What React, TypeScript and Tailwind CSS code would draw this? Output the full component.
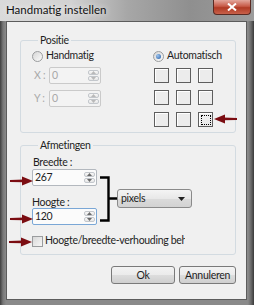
import React from "react";

function Spinner({ disabled }: { disabled?: boolean }) {
  const c = disabled ? "#b9b9b9" : "#6b6b6b";
  return (
    <div className="ml-auto mr-[1px] my-[1px] w-[11px] flex flex-col gap-[1px]">
      <div className="flex-1 rounded-[2px] border border-[#c3c7cc] bg-[linear-gradient(#f8f8f8,#e6e6e6)] flex items-center justify-center">
        <svg width="5" height="3" viewBox="0 0 5 3">
          <path d="M0 3 L2.5 0 L5 3 Z" fill={c} />
        </svg>
      </div>
      <div className="flex-1 rounded-[2px] border border-[#c3c7cc] bg-[linear-gradient(#f8f8f8,#e6e6e6)] flex items-center justify-center">
        <svg width="5" height="3" viewBox="0 0 5 3">
          <path d="M0 0 L2.5 3 L5 0 Z" fill={c} />
        </svg>
      </div>
    </div>
  );
}

function NumField({
  value,
  width,
  disabled,
  focused,
}: {
  value: string;
  width: string;
  disabled?: boolean;
  focused?: boolean;
}) {
  const border = disabled
    ? "border-[#cacaca] bg-[#f3f3f3] text-[#a8a8a8]"
    : focused
    ? "border-[#7aa7d6] bg-[#fbfbfb] text-[#1e1e1e]"
    : "border-[#b3b8be] bg-[#fbfbfb] text-[#1e1e1e]";
  return (
    <div className={`${width} h-[17px] rounded-[2px] border flex items-center ${border}`}>
      <span className="pl-[2px] leading-none text-[10.5px]">{value}</span>
      <Spinner disabled={disabled} />
    </div>
  );
}

function Radio({ checked, label }: { checked?: boolean; label: string }) {
  return (
    <div className="h-[14px] flex items-center gap-[3px]">
      <div className="w-[11px] h-[11px] rounded-full border border-[#9a9c9e] bg-[linear-gradient(135deg,#d6d6d6,#fbfbfb)] flex items-center justify-center">
        {checked && (
          <div className="w-[5px] h-[5px] rounded-full bg-[radial-gradient(circle_at_35%_35%,#9cc3ee,#245da6)]" />
        )}
      </div>
      <span>{label}</span>
    </div>
  );
}

function Arrow({ left, top, dir }: { left: string; top: string; dir: "l" | "r" }) {
  return (
    <svg
      className={`absolute ${left} ${top}`}
      width="24"
      height="10"
      viewBox="0 0 24 10"
    >
      <g transform={dir === "l" ? "translate(24 0) scale(-1 1)" : undefined}>
        <path d="M0 4 L14 3.6 L14 6.2 L0 6 Z" fill="#7b0d12" />
        <path d="M12 0.5 L23 5 L12 9.5 Z" fill="#7b0d12" />
      </g>
    </svg>
  );
}

export default function App() {
  const pos = [0, 1, 2, 3, 4, 5, 6, 7, 8];
  return (
    <div className="relative w-[254px] h-[305px] overflow-hidden bg-[linear-gradient(90deg,#3e3e3e,#777_3px,#8a8a8a_6px,#8a8a8a_248px,#6a6a6a_251px,#3a3a3a)] font-['Lato',sans-serif] text-[10.5px] tracking-[-0.3px] text-[#1e1e1e] flex flex-col">
      {/* titelbalk */}
      <div className="h-[21px] flex items-start bg-[linear-gradient(90deg,#dadada_0%,#d2d2d2_28%,#a7a7a7_50%,#8f8f8f_75%,#9c9c9c_100%)]">
        <span className="pl-[6px] pt-[3px] text-[11.5px] tracking-normal leading-[13px] text-[#111] [text-shadow:0_0_6px_#fff]">
          Handmatig instellen
        </span>
        <div className="ml-auto mr-[3px] w-[38px] h-[15px] rounded-b-[4px] border border-t-0 border-[#5a2a22] bg-[linear-gradient(#e3a79c,#c75a47_45%,#b03a24_55%,#c8614a)] flex items-center justify-center">
          <svg width="10" height="8" viewBox="0 0 10 8">
            <path d="M1 0.5 L9 7.5 M9 0.5 L1 7.5" stroke="#fff" strokeWidth="2" />
          </svg>
        </div>
      </div>

      {/* venster inhoud */}
      <div className="flex-1 ml-[6px] mr-[7px] mb-[5px] bg-[#f0f0f0] border border-[#5c5c5c] flex flex-col pl-[13px]">
        <fieldset className="mt-[11px] w-[216px] rounded-[3px] border border-[#d3dbe1] pl-[11px] pt-[2px] pb-[5px]">
          <legend className="ml-[6px] px-[2px] leading-[14px]">Positie</legend>
          <div className="flex">
            <div className="w-[121px] flex flex-col">
              <Radio label="Handmatig" />
              <div className="mt-[4px] flex items-center">
                <span className="w-[17px] pl-[2px] text-[#a9a9a9]">X :</span>
                <NumField value="0" width="w-[52px]" disabled />
              </div>
              <div className="mt-[6px] flex items-center">
                <span className="w-[17px] pl-[2px] text-[#a9a9a9]">Y :</span>
                <NumField value="0" width="w-[52px]" disabled />
              </div>
            </div>
            <div className="flex flex-col">
              <Radio checked label="Automatisch" />
              <div className="mt-[5px] ml-[1px] grid grid-cols-[15px_15px_15px] gap-[7px]">
                {pos.map((i) => (
                  <div
                    key={i}
                    className="w-[15px] h-[15px] border border-[#5e5e5e] bg-[#ececec] shadow-[inset_1px_1px_0_#fff] flex items-center justify-center"
                  >
                    {i === 8 && <div className="w-[10px] h-[10px] border border-dotted border-black" />}
                  </div>
                ))}
              </div>
            </div>
          </div>
        </fieldset>

        <fieldset className="mt-[5px] w-[216px] rounded-[3px] border border-[#d3dbe1] pl-[11px] pt-[4px] pb-[7px]">
          <legend className="ml-[6px] px-[2px] leading-[14px]">Afmetingen</legend>
          <div className="flex items-start">
            <div className="w-[65px] flex flex-col">
              <span className="pl-[1px] h-[12px] leading-[12px]">Breedte :</span>
              <div className="mt-[1px]">
                <NumField value="267" width="w-[65px]" />
              </div>
              <span className="mt-[10px] h-[12px] leading-[12px]">Hoogte :</span>
              <div className="mt-[0px]">
                <NumField value="120" width="w-[65px]" focused />
              </div>
            </div>
            <svg className="mt-[20px] ml-[3px]" width="17" height="46" viewBox="0 0 17 46">
              <path d="M0 1.5 H8.5 V44.5 H0 M8.5 22.5 H17" stroke="#000" strokeWidth="2.4" fill="none" />
            </svg>
            <div className="mt-[33px] w-[75px] h-[19px] rounded-[3px] border border-[#8a8a8a] bg-[linear-gradient(#f4f4f4,#e8e8e8_50%,#dbdbdb_51%,#d2d2d2)] flex items-center px-[3px]">
              <span>pixels</span>
              <svg className="ml-auto mr-[3px]" width="7" height="4" viewBox="0 0 7 4">
                <path d="M0 0 H7 L3.5 4 Z" fill="#222" />
              </svg>
            </div>
          </div>
          <div className="mt-[10px] h-[12px] flex items-center gap-[2px]">
            <div className="w-[11px] h-[11px] border border-[#9a9c9e] bg-[linear-gradient(135deg,#d8d8d8,#f7f7f7)]" />
            <span className="whitespace-nowrap overflow-hidden w-[140px]">
              Hoogte/breedte-verhouding behouden
            </span>
          </div>
        </fieldset>

        <div className="mt-[11px] pr-[10px] flex justify-end gap-[4px]">
          <button className="w-[64px] h-[18px] rounded-[3px] border border-[#7a7a7a] bg-[linear-gradient(#f3f3f3,#ebebeb_50%,#dddddd_51%,#cfcfcf)] leading-none">
            Ok
          </button>
          <button className="w-[57px] h-[18px] rounded-[3px] border border-[#7a7a7a] bg-[linear-gradient(#f3f3f3,#ebebeb_50%,#dddddd_51%,#cfcfcf)] leading-none">
            Annuleren
          </button>
        </div>
      </div>

      {/* rode pijlen */}
      <Arrow left="left-[213px]" top="top-[114px]" dir="l" />
      <Arrow left="left-[10px]" top="top-[176px]" dir="r" />
      <Arrow left="left-[10px]" top="top-[214px]" dir="r" />
      <Arrow left="left-[9px]" top="top-[237px]" dir="r" />
    </div>
  );
}
